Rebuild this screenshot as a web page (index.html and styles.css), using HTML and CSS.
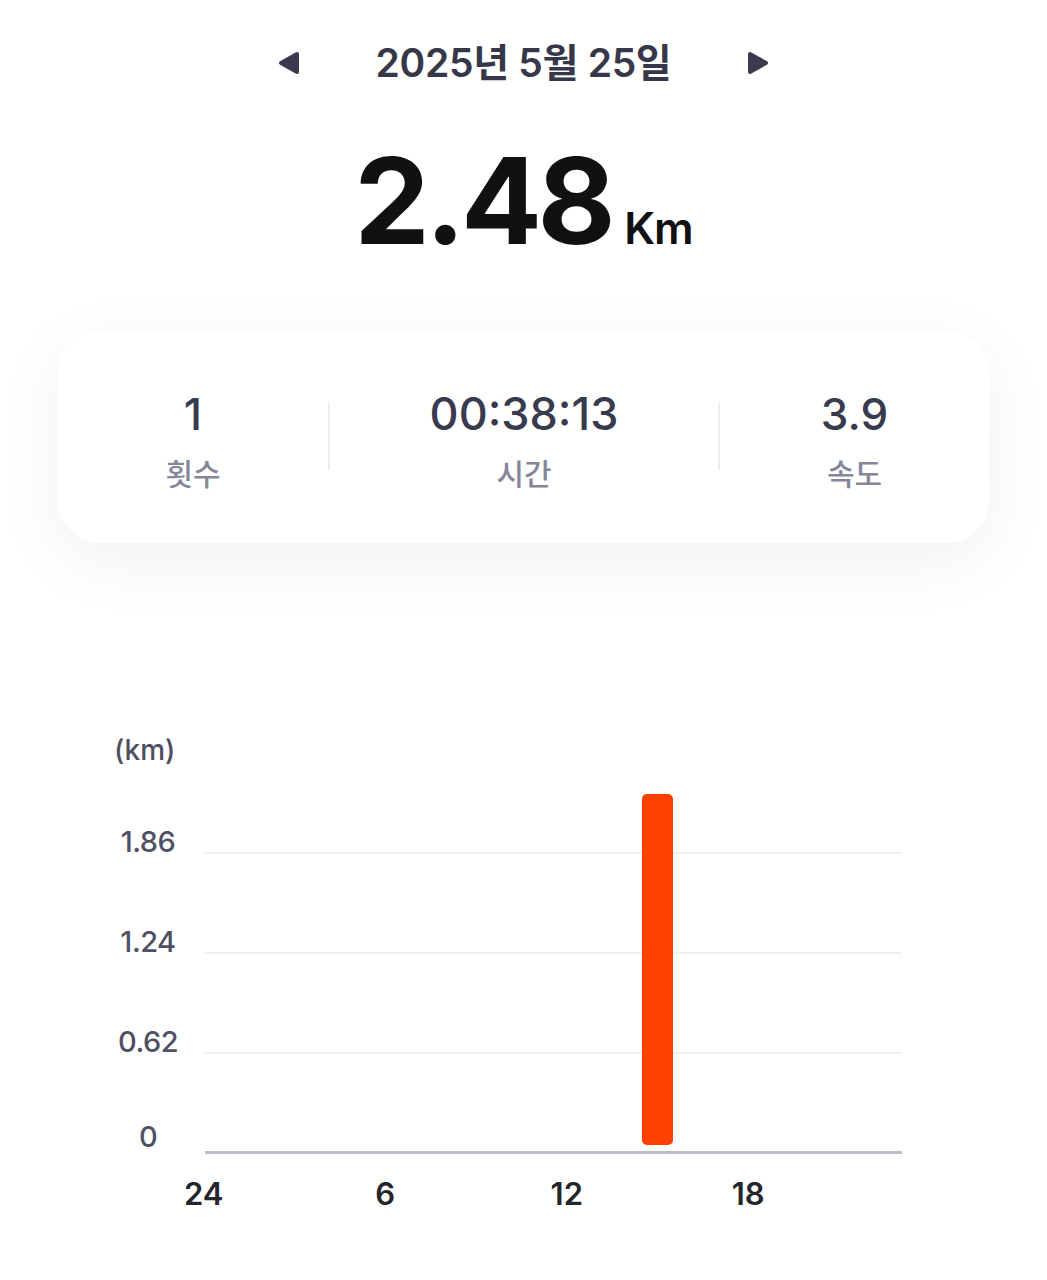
FILE: index.html
```html
<!DOCTYPE html>
<html lang="ko">
<head>
<meta charset="utf-8">
<title>Daily distance</title>
<link rel="stylesheet" href="styles.css">
</head>
<body>
<div class="page">
  <div class="date-nav">
    <button class="arrow" aria-label="previous">
      <svg width="22" height="24" viewBox="0 0 22 24"><polygon points="19,3 19,21 3,12" fill="#3a3b4f" stroke="#3a3b4f" stroke-width="4" stroke-linejoin="round"/></svg>
    </button>
    <div class="date">2025년 5월 25일</div>
    <button class="arrow" aria-label="next">
      <svg width="22" height="24" viewBox="0 0 22 24"><polygon points="3,3 3,21 19,12" fill="#3a3b4f" stroke="#3a3b4f" stroke-width="4" stroke-linejoin="round"/></svg>
    </button>
  </div>

  <div class="total">
    <span class="total-value">2.48</span><span class="total-unit">Km</span>
  </div>

  <div class="card">
    <div class="stat stat-side">
      <div class="stat-value">1</div>
      <div class="stat-label">횟수</div>
    </div>
    <div class="divider"></div>
    <div class="stat stat-mid">
      <div class="stat-value">00:38:13</div>
      <div class="stat-label">시간</div>
    </div>
    <div class="divider"></div>
    <div class="stat stat-side">
      <div class="stat-value">3.9</div>
      <div class="stat-label">속도</div>
    </div>
  </div>

  <div class="chart">
    <div class="chart-unit">(km)</div>
    <div class="chart-body">
      <div class="y-axis">
        <div class="y-row y-row-first"><span>1.86</span></div>
        <div class="y-row"><span>1.24</span></div>
        <div class="y-row"><span>0.62</span></div>
        <div class="y-row"><span class="zero">0</span></div>
      </div>
      <div class="plot">
        <div class="grid-row grid-row-first"></div>
        <div class="grid-row"></div>
        <div class="grid-row"></div>
        <div class="grid-row grid-row-base"></div>
        <div class="bar" style="left: 437px; height: 351px;"></div>
      </div>
    </div>
    <div class="x-axis">
      <div class="x-tick">24</div>
      <div class="x-tick">6</div>
      <div class="x-tick">12</div>
      <div class="x-tick">18</div>
    </div>
  </div>
</div>
</body>
</html>
```

FILE: styles.css
```css
* { box-sizing: border-box; }

body {
  margin: 0;
  background: #ffffff;
  font-family: Inter, "Noto Sans CJK KR", "Noto Sans", sans-serif;
  color: #3a3b4f;
}

.page {
  width: 1047px;
  overflow: hidden;
}

.date-nav {
  display: flex;
  justify-content: center;
  align-items: center;
  gap: 76px;
  margin-top: 40px;
  height: 46px;
}

.arrow {
  border: 0;
  background: none;
  padding: 0;
  width: 22px;
  height: 24px;
  display: flex;
}

.date {
  font-family: Inter, "Noto Sans CJK KR", sans-serif;
  font-size: 39px;
  font-weight: 600;
  line-height: 46px;
  color: #363849;
  letter-spacing: -0.3px;
}

.total {
  display: flex;
  justify-content: center;
  align-items: baseline;
  margin-top: 55px;
  height: 120px;
  line-height: 120px;
  color: #111114;
}

.total-value {
  font-size: 120px;
  font-weight: 700;
  letter-spacing: -4.5px;
}

.total-unit {
  font-size: 44px;
  font-weight: 600;
  margin-left: 13px;
  letter-spacing: -1px;
}

.card {
  margin: 69px 58px 0;
  height: 213px;
  background: #ffffff;
  border-radius: 42px;
  box-shadow: 0 18px 70px rgba(0, 0, 0, 0.06);
  display: grid;
  grid-template-columns: 270px 2px 388px 2px 1fr;
  align-items: start;
  padding-top: 58px;
}

.stat {
  display: flex;
  flex-direction: column;
  align-items: center;
}

.stat-value {
  font-size: 45px;
  font-weight: 500;
  line-height: 52px;
  color: #383a4d;
  letter-spacing: 0;
}

.stat-side .stat-value { font-size: 44px; }

.stat-label {
  margin-top: 12px;
  font-family: "Noto Sans CJK KR", sans-serif;
  font-size: 30px;
  font-weight: 500;
  line-height: 40px;
  color: #858699;
}

.divider {
  margin-top: 15px;
  height: 67px;
  background: #eeeef1;
}

.chart {
  margin-top: 191px;
}

.chart-unit {
  padding-left: 114px;
  font-size: 28px;
  font-weight: 500;
  line-height: 32px;
  color: #4d4e62;
}

.chart-body {
  display: flex;
}

.y-axis {
  width: 205px;
  padding-left: 110px;
  display: flex;
  flex-direction: column;
}

.y-row {
  width: 76px;
  height: 100px;
  display: flex;
  align-items: flex-end;
  justify-content: center;
  font-size: 29px;
  font-weight: 500;
  line-height: 28px;
  color: #4f5064;
  letter-spacing: -0.5px;
}

.y-row span { margin-bottom: -2px; }
.y-row .zero { margin-bottom: 3px; }
.y-row-first { height: 88px; }

.plot {
  position: relative;
  width: 697px;
  display: flex;
  flex-direction: column;
}

.grid-row {
  height: 100px;
  border-bottom: 2px solid #f1f1f3;
}

.grid-row-first { height: 88px; }

.grid-row-base {
  border-bottom: 3px solid #bcbdc7;
}

.bar {
  position: absolute;
  bottom: 9px;
  width: 31px;
  background: #ff4000;
  border-radius: 5px;
}

.x-axis {
  display: flex;
  margin-left: 113px;
  margin-top: 22px;
}

.x-tick {
  width: 181.5px;
  text-align: center;
  font-size: 31px;
  font-weight: 600;
  line-height: 36px;
  color: #25262c;
}
```
